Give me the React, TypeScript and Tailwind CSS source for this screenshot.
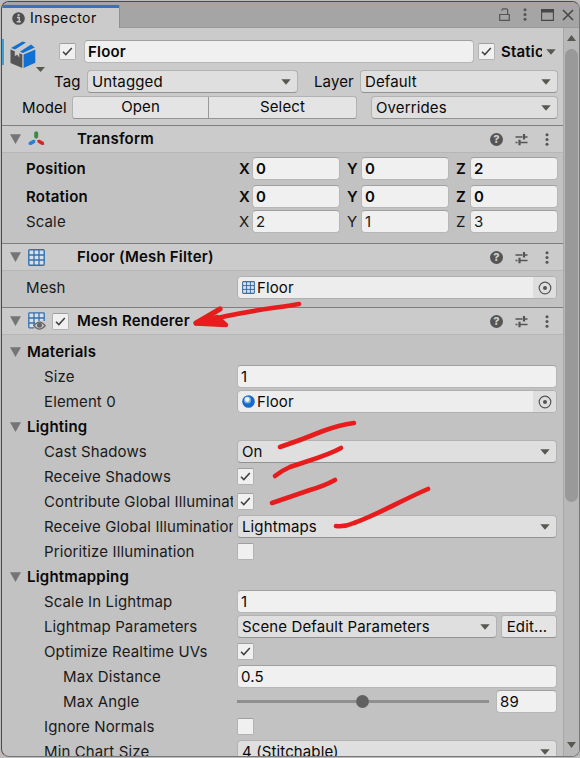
import React from "react";

const cx = (...c: (string | undefined | false)[]) => c.filter(Boolean).join(" ");

function Caret({ className }: { className?: string }) {
  return (
    <svg width="10" height="6" viewBox="0 0 10 6" className={cx("shrink-0", className)}>
      <path d="M0.3 0.3H9.7L5 5.7Z" fill="#585850" />
    </svg>
  );
}

function Foldout() {
  return (
    <svg width="11" height="10" viewBox="0 0 11 10" className="shrink-0">
      <path d="M0 0.3H11L5.5 10Z" fill="#757575" />
    </svg>
  );
}

function Check({ on, className }: { on?: boolean; className?: string }) {
  return (
    <span
      className={cx(
        "flex h-[17px] w-[17px] shrink-0 items-center justify-center rounded-[2px] border border-[#b2b2b2] border-t-[#9f9f9f] bg-[#f0f0f0]",
        className
      )}
    >
      {on && (
        <svg width="13" height="13" viewBox="0 0 13 13">
          <path d="M2 6.8L4.8 9.6L10.8 3" fill="none" stroke="#404040" strokeWidth="1.5" />
        </svg>
      )}
    </span>
  );
}

function Field({ children, className }: { children?: React.ReactNode; className?: string }) {
  return (
    <div
      className={cx(
        "flex h-[23px] items-center overflow-hidden rounded-[4px] border border-[#b7b7b7] border-t-[#a0a0a0] bg-[#f0f0f0] pl-[3px]",
        className
      )}
    >
      {children}
    </div>
  );
}

function Dropdown({ children, className }: { children?: React.ReactNode; className?: string }) {
  return (
    <div
      className={cx(
        "flex h-[23px] items-center justify-between overflow-hidden rounded-[4px] border border-[#b2b2b2] border-b-[#939393] bg-[#dfdfdf] pr-[6px] pl-1",
        className
      )}
    >
      <span>{children}</span>
      <Caret />
    </div>
  );
}

function GridIcon({ size }: { size: number }) {
  return (
    <svg width={size} height={size} viewBox="0 0 17 17" className="shrink-0">
      <rect x="0.8" y="0.8" width="15.4" height="15.4" rx="1" fill="#d9e0e8" stroke="#3470ae" strokeWidth="1.4" />
      <path d="M6 1V16M11 1V16M1 6H16M1 11H16" stroke="#3470ae" strokeWidth="1.3" />
    </svg>
  );
}

function RendererIcon() {
  return (
    <svg width="18" height="18" viewBox="0 0 18 18" className="shrink-0">
      <path d="M0.8 0.8H16.2V8L11 9L6.5 13L5.5 16H0.8Z" fill="#d9e0e8" />
      <path d="M6 15.8H1.5Q0.8 15.8 0.8 15V1.5Q0.8 0.8 1.5 0.8H15.5Q16.2 0.8 16.2 1.5V9M6 1V14M11 1V9M1 6H16M1 11H7" fill="none" stroke="#3470ae" strokeWidth="1.3" />
      <path d="M5.8 13.7Q11.5 6.5 17.2 13.7Q11.5 20.7 5.8 13.7Z" fill="#c8c8c8" stroke="#666" strokeWidth="1.3" />
      <circle cx="11.5" cy="13.3" r="2.5" fill="#666" />
    </svg>
  );
}

function TransformIcon() {
  return (
    <svg width="18" height="16" viewBox="0 0 18 16" className="shrink-0">
      <path d="M8.2 0L10.2 1.6V6.2L8.2 8L6.2 6.2V1.6Z" fill="#3c8c40" />
      <path d="M7.3 9L7.2 11.7L2.9 14.2L0.3 13.2L0.9 11.2L5 8.8Z" fill="#2f7ed0" />
      <path d="M9.2 9L11.7 8.8L15.8 11.1L16.3 13.8L13.8 14L9.7 11.6Z" fill="#cc2929" />
    </svg>
  );
}

function Kebab() {
  return (
    <svg width="4" height="13" viewBox="0 0 4 13" className="shrink-0">
      <circle cx="2" cy="1.8" r="1.5" fill="#555" />
      <circle cx="2" cy="6.5" r="1.5" fill="#555" />
      <circle cx="2" cy="11.2" r="1.5" fill="#555" />
    </svg>
  );
}

function HeaderTools() {
  return (
    <div className="ml-auto flex items-center pr-[14px]">
      <span className="flex h-[13px] w-[13px] items-center justify-center rounded-full bg-[#555] text-[11px] leading-none font-extrabold tracking-normal text-[#cbcbcb]">
        ?
      </span>
      <svg width="13" height="13" viewBox="0 0 13 13" className="ml-3">
        <path d="M0.5 4H7.5M10 4H12.5M0.5 9.5H2.5M5 9.5H12.5" stroke="#555" strokeWidth="1.5" />
        <path d="M9 1V6.5M4.5 6.8V12.3" stroke="#555" strokeWidth="2.2" />
      </svg>
      <span className="ml-[17px] flex">
        <Kebab />
      </span>
    </div>
  );
}

function SectionHeader({ icon, check, title }: { icon: React.ReactNode; check?: boolean; title: string }) {
  return (
    <div className="flex h-[28px] shrink-0 items-center border-t border-b border-t-[#7f7f7f] border-b-[#b6b6b6] bg-[#cbcbcb] pl-2">
      <Foldout />
      <span className="ml-[7px] flex w-6 justify-start">{icon}</span>
      <span className="flex w-[25px]">{check && <Check on />}</span>
      <span className="font-semibold tracking-[0.2px]">{title}</span>
      <HeaderTools />
    </div>
  );
}

function Row({ label, indent, children }: { label: string; indent?: "none" | "one" | "two"; children?: React.ReactNode }) {
  return (
    <div className="flex h-[25px] items-center pr-[6px]">
      <div
        className={cx(
          "mr-[4px] w-[231px] shrink-0 overflow-hidden whitespace-nowrap text-[#1a1a1a]",
          indent === "none" && "pl-[24px]",
          indent === "two" && "pl-[61px]",
          (!indent || indent === "one") && "pl-[42px]"
        )}
      >
        {label}
      </div>
      {children}
    </div>
  );
}

function Group({ title }: { title: string }) {
  return (
    <div className="flex h-[25px] items-center pl-2 font-semibold tracking-[0.2px]">
      <Foldout />
      <span className="ml-[6px]">{title}</span>
    </div>
  );
}

function ObjectField({ icon, children }: { icon: React.ReactNode; children: React.ReactNode }) {
  return (
    <div className="flex h-[23px] flex-1 items-center overflow-hidden rounded-[4px] border border-[#b0b0b0] bg-[#ededed] pl-1">
      {icon}
      <span className="ml-[2px] flex-1">{children}</span>
      <span className="flex h-full w-[23px] items-center justify-center rounded-r-[3px] bg-[#dedede]">
        <svg width="14" height="14" viewBox="0 0 14 14">
          <circle cx="7" cy="7" r="5.8" fill="none" stroke="#555" strokeWidth="1.2" />
          <circle cx="7" cy="7" r="2" fill="#555" />
        </svg>
      </span>
    </div>
  );
}

function Vector({ label, values, bold }: { label: string; values: string[]; bold?: boolean }) {
  return (
    <div className={cx("flex h-[25px] items-center pr-[5px]", bold ? "font-semibold tracking-[0.2px]" : "text-[#1a1a1a]")}>
      <span className="w-[237px] shrink-0 pl-6">{label}</span>
      {["X", "Y", "Z"].map((axis, i) => (
        <React.Fragment key={axis}>
          <span className={cx("shrink-0", i === 0 ? "w-[13px]" : "ml-[7px] w-[14px]")}>{axis}</span>
          <Field className="w-[88px] shrink-0">{values[i]}</Field>
        </React.Fragment>
      ))}
    </div>
  );
}

function Annotations() {
  return (
    <svg width="580" height="758" viewBox="0 0 580 758" className="pointer-events-none absolute top-0 left-0">
      <g fill="none" stroke="#e81c1c" strokeWidth="4.6" strokeLinecap="round" strokeLinejoin="round">
        <path d="M299 304C270 309 235 312 198 323" />
        <path d="M220 309L196 323" strokeWidth="5.2" />
        <path d="M196 323.5L217 317L226 325Z" fill="#e81c1c" />
        <path d="M280 447C292 443 306 438 323 431Q339 425 354 423" />
        <path d="M275 476Q281 471 290 467C306 461 325 457 341 448" />
        <path d="M272 503L310 490Q324 486 335 480" />
        <path d="M336 526Q345 527 354 523C379 514 402 500 428 489" />
      </g>
    </svg>
  );
}

export default function App() {
  return (
    <div className="relative h-[758px] w-[580px] overflow-hidden bg-[#bcbcbc] pt-px pl-px font-['Inter',sans-serif] text-[15px] leading-[20px] tracking-[0.12px] text-[#090909]">
      <div className="flex h-[756px] w-[579px] flex-col overflow-hidden rounded-[8px] border border-r-[#777] border-b-[#777] border-l-[#6b4030] border-t-[#6b4030] bg-[#c2c2c2]">
        <div className="flex h-[26px] shrink-0 bg-[#a5a5a5]">
          <div className="mt-[3px] flex h-[23px] w-[118px] items-center rounded-t-[2px] border-t-[3px] border-r border-t-[#3a72b8] border-r-[#909090] bg-[#cbcbcb] pl-[10px]">
            <svg width="13" height="13" viewBox="0 0 13 13">
              <circle cx="6.5" cy="6.5" r="6.3" fill="#505050" />
              <path d="M5 5.5H7.2V9.5M4.7 9.7H8.8" stroke="#cbcbcb" strokeWidth="1.4" fill="none" />
              <circle cx="6.6" cy="3.1" r="1.1" fill="#cbcbcb" />
            </svg>
            <span className="ml-[5px] text-[14px] tracking-[0.5px]">Inspector</span>
          </div>
          <div className="flex flex-1 items-center justify-end border-b border-[#999] pr-[5px]">
            <svg width="11" height="13" viewBox="0 0 11 13">
              <path d="M0.7 6.5H10.3V12.3H0.7ZM3 2.7V1.8Q3 0.8 4 0.8H7.5Q8.6 0.8 8.6 1.8V6" fill="none" stroke="#555" strokeWidth="1.2" />
            </svg>
            <span className="ml-[13px] flex"><Kebab /></span>
            <svg width="13" height="12" viewBox="0 0 13 12" className="ml-[14px]">
              <path d="M0.6 0.6H12.4V11.4H0.6Z" fill="none" stroke="#484848" strokeWidth="1.1" />
              <path d="M0 0H13V3.5H0Z" fill="#484848" />
            </svg>
            <svg width="12" height="12" viewBox="0 0 12 12" className="ml-[8px]">
              <path d="M1 1L11 11M11 1L1 11" stroke="#484848" strokeWidth="1.6" />
            </svg>
          </div>
        </div>
        <div className="flex min-h-0 flex-1">
          <div className="flex w-[561px] shrink-0 flex-col overflow-hidden">
            <div className="flex h-[97px] shrink-0 bg-[#cbcbcb]">
              <div className="mt-[11px] h-[26px] w-[2px] bg-[#38a0d4]" />
              <div className="mt-[12px] ml-[5px] h-[32px] w-[35px] shrink-0">
                <svg width="36" height="32" viewBox="0 0 36 32">
                  <path d="M1.5 9.5L5.8 11.3V16L8.3 14.8L10.3 17.8V13.3L13.3 14.6V28L1.5 23Z" fill="#555" />
                  <path d="M14.6 14.6L26.3 9.4V22.8L14.6 28Z" fill="#1070d4" />
                  <path d="M2 8L13.5 1.6L17 2.6L6 9.6Z" fill="#1070d4" />
                  <path d="M10.8 11.7L22 4.6L25.8 7.5L14 13Z" fill="#1070d4" />
                  <path d="M27 27H36L31.5 32Z" fill="#585850" />
                </svg>
              </div>
              <div className="flex flex-1 flex-col pt-[12px]">
                <div className="flex h-[23px] items-center">
                  <Check on className="ml-[15px]" />
                  <Field className="ml-[8px] w-[390px] font-semibold tracking-[0.2px]">Floor</Field>
                  <Check on className="ml-[4px]" />
                  <span className="ml-[6px] w-[41px] overflow-hidden font-semibold tracking-[0.2px]">Static</span>
                  <Caret className="ml-[4px]" />
                </div>
                <div className="mt-[7px] flex h-[23px] items-center">
                  <span className="ml-[10px] w-[33px]">Tag</span>
                  <Dropdown className="w-[211px]">Untagged</Dropdown>
                  <span className="ml-[16px] w-[46px]">Layer</span>
                  <Dropdown className="w-[198px]">Default</Dropdown>
                </div>
                <div className="mt-[3px] -ml-[22px] flex h-[23px] items-center">
                  <span className="w-[50px]">Model</span>
                  <div className="flex h-[23px] w-[285px] overflow-hidden rounded-[3px] border border-[#b2b2b2] border-b-[#939393] bg-[#e4e4e4] text-center">
                    <span className="w-[136px] border-r border-[#999]">Open</span>
                    <span className="flex-1">Select</span>
                  </div>
                  <Dropdown className="ml-[14px] w-[187px]">Overrides</Dropdown>
                </div>
              </div>
            </div>
            <SectionHeader icon={<TransformIcon />} title="Transform" />
            <div className="h-[90px] shrink-0 pt-[3px]">
              <Vector label="Position" values={["0", "0", "2"]} bold />
              <div className="h-[3px]" />
              <Vector label="Rotation" values={["0", "0", "0"]} bold />
              <Vector label="Scale" values={["2", "1", "3"]} />
            </div>
            <SectionHeader icon={<GridIcon size={17} />} title="Floor (Mesh Filter)" />
            <div className="h-[36px] shrink-0 pt-[4px]">
              <Row label="Mesh" indent="none">
                <ObjectField icon={<GridIcon size={13} />}>Floor</ObjectField>
              </Row>
            </div>
            <SectionHeader icon={<RendererIcon />} check title="Mesh Renderer" />
            <div className="shrink-0 pt-[4px]">
              <Group title="Materials" />
              <Row label="Size"><Field className="flex-1">1</Field></Row>
              <Row label="Element 0">
                <ObjectField
                  icon={
                    <svg width="13" height="13" viewBox="0 0 13 13">
                      <circle cx="6.5" cy="6.5" r="6.3" fill="#176bc8" />
                      <circle cx="5.5" cy="5" r="3.5" fill="#76aee7" />
                      <circle cx="5.2" cy="4.5" r="2.4" fill="#f0f0f0" />
                    </svg>
                  }
                >
                  Floor
                </ObjectField>
              </Row>
              <Group title="Lighting" />
              <Row label="Cast Shadows"><Dropdown className="flex-1">On</Dropdown></Row>
              <Row label="Receive Shadows"><Check on /></Row>
              <Row label="Contribute Global Illumination"><Check on /></Row>
              <Row label="Receive Global Illumination"><Dropdown className="flex-1">Lightmaps</Dropdown></Row>
              <Row label="Prioritize Illumination"><Check /></Row>
              <Group title="Lightmapping" />
              <Row label="Scale In Lightmap"><Field className="flex-1">1</Field></Row>
              <Row label="Lightmap Parameters">
                <Dropdown className="w-[260px]">Scene Default Parameters</Dropdown>
                <div className="ml-[4px] flex h-[23px] flex-1 items-center justify-center rounded-[3px] border border-[#b2b2b2] border-b-[#939393] bg-[#e4e4e4] pr-1">Edit...</div>
              </Row>
              <Row label="Optimize Realtime UVs"><Check on /></Row>
              <Row label="Max Distance" indent="two"><Field className="flex-1">0.5</Field></Row>
              <Row label="Max Angle" indent="two">
                <div className="flex h-3 w-[252px] items-center">
                  <span className="h-[3px] w-[119px] bg-[#8f8f8f]" />
                  <span className="h-[13px] w-[13px] shrink-0 rounded-full bg-[#616161]" />
                  <span className="h-[3px] flex-1 bg-[#8f8f8f]" />
                </div>
                <Field className="ml-[7px] flex-1">89</Field>
              </Row>
              <Row label="Ignore Normals"><Check /></Row>
              <Row label="Min Chart Size"><Dropdown className="flex-1">4 (Stitchable)</Dropdown></Row>
            </div>
          </div>
          <div className="flex flex-1 flex-col items-center border-l border-[#a8a8a8] bg-[#b8b8b8] pt-[7px] pb-[8px]">
            <svg width="9" height="6" viewBox="0 0 9 6"><path d="M0 6H9L4.5 0Z" fill="#585850" /></svg>
            <div className="mt-[8px] h-[453px] w-[13px] rounded-full bg-[#999]" />
            <svg width="9" height="6" viewBox="0 0 9 6" className="mt-auto"><path d="M0 0H9L4.5 6Z" fill="#585850" /></svg>
          </div>
        </div>
      </div>
      <Annotations />
    </div>
  );
}
